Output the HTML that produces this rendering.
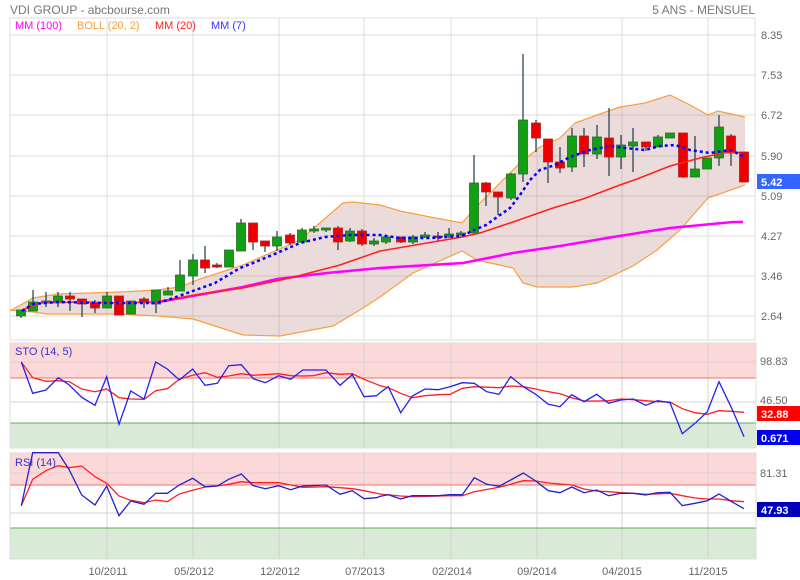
<!DOCTYPE html>
<html><head><meta charset="utf-8"><style>
body{margin:0;background:#fff;width:800px;height:580px;overflow:hidden;font-family:"Liberation Sans",Arial,sans-serif}
svg{position:absolute;left:0;top:0}
</style></head><body>
<svg id="s" width="800" height="580" xmlns="http://www.w3.org/2000/svg" font-family="Liberation Sans, Arial, sans-serif">
<rect width="800" height="580" fill="#fff"/>
<text x="10" y="14" font-size="12" fill="#777">VDI GROUP - abcbourse.com</text>
<text x="755" y="14" font-size="12" fill="#777" text-anchor="end">5 ANS - MENSUEL</text>
<!-- main panel -->
<rect x="10" y="18" width="745" height="322" fill="#fff" stroke="#ddd"/>
<g id="grid" stroke="#ddd" stroke-width="1"></g>
<rect x="10" y="343" width="746" height="35" fill="#fdd8d8"/>
<rect x="10" y="423" width="746" height="25" fill="#d9ead7"/>
<rect x="10" y="453" width="746" height="32" fill="#fdd8d8"/>
<rect x="10" y="528" width="746" height="31" fill="#d9ead7"/>
<g id="grid2" stroke="#d8d0d0" stroke-width="1"></g>
<line x1="10" y1="378" x2="756" y2="378" stroke="#f07070"/>
<line x1="10" y1="423" x2="756" y2="423" stroke="#66aa66"/>
<line x1="10" y1="485" x2="756" y2="485" stroke="#f07070"/>
<line x1="10" y1="528" x2="756" y2="528" stroke="#66aa66"/>
<rect x="10" y="343" width="746" height="105" fill="none" stroke="#ddd"/>
<rect x="10" y="453" width="746" height="106" fill="none" stroke="#ddd"/>
<g id="plot"></g>
<g font-size="11" fill="#666">
<text x="761" y="39">8.35</text><text x="761" y="79">7.53</text><text x="761" y="119">6.72</text><text x="761" y="160">5.90</text><text x="761" y="200">5.09</text><text x="761" y="240">4.27</text><text x="761" y="280">3.46</text><text x="761" y="320">2.64</text>
<text x="760" y="365">98.83</text><text x="760" y="404">46.50</text><text x="760" y="477">81.31</text>
<text x="108" y="575" text-anchor="middle">10/2011</text><text x="194" y="575" text-anchor="middle">05/2012</text><text x="280" y="575" text-anchor="middle">12/2012</text><text x="365" y="575" text-anchor="middle">07/2013</text><text x="452" y="575" text-anchor="middle">02/2014</text><text x="537" y="575" text-anchor="middle">09/2014</text><text x="622" y="575" text-anchor="middle">04/2015</text><text x="708" y="575" text-anchor="middle">11/2015</text>
</g>
<rect x="757" y="174" width="43" height="15" fill="#3366ff"/><text x="761" y="186" font-size="11" font-weight="bold" fill="#fff">5.42</text>
<rect x="757" y="406" width="43" height="15" fill="#ff0000"/><text x="761" y="418" font-size="11" font-weight="bold" fill="#fff">32.88</text>
<rect x="757" y="430" width="43" height="15" fill="#0000ee"/><text x="761" y="442" font-size="11" font-weight="bold" fill="#fff">0.671</text>
<rect x="757" y="502" width="43" height="15" fill="#0000bb"/><text x="761" y="514" font-size="11" font-weight="bold" fill="#fff">47.93</text>
<g font-size="11">
<text x="15" y="29" fill="#ff00ff">MM (100)</text><text x="77" y="29" fill="#f7a040">BOLL (20, 2)</text><text x="155" y="29" fill="#ff2020">MM (20)</text><text x="211" y="29" fill="#3333ff">MM (7)</text>
<text x="15" y="355" fill="#3333cc">STO (14, 5)</text>
<text x="15" y="466" fill="#3333cc">RSI (14)</text>
</g>
</svg>
<script>
var NS="http://www.w3.org/2000/svg";
function el(p,t,a){var e=document.createElementNS(NS,t);for(var k in a)e.setAttribute(k,a[k]);document.getElementById(p).appendChild(e);return e;}
var vx=[107,193,279,364,451,537,622,708];
vx.forEach(function(x){el("grid","line",{x1:x,y1:18,x2:x,y2:340});el("grid2","line",{x1:x,y1:343,x2:x,y2:448});el("grid2","line",{x1:x,y1:453,x2:x,y2:559});});
[35,75,115,156,196,236,276,316].forEach(function(y){el("grid","line",{x1:10,y1:y,x2:755,y2:y});});
[362,402].forEach(function(y){el("grid2","line",{x1:10,y1:y,x2:756,y2:y});});
[473,513].forEach(function(y){el("grid2","line",{x1:10,y1:y,x2:756,y2:y});});
function pts(a){return a.map(function(p){return p[0]+","+p[1]}).join(" ");}
var up=[[10,311],[33,298],[58,294],[120,292],[157,290],[180,287],[200,279],[243,265],[277,250],[300,240],[343,203],[353,202],[380,205],[400,211],[420,215],[462,223],[477,206],[520,163],[540,147],[560,138],[575,123],[597,115],[620,107],[645,103],[670,95],[690,105],[708,115],[718,111],[745,117]];
var lo=[[10,310],[33,312],[47,314],[120,314],[158,316],[193,319],[243,335],[280,336],[333,326],[360,310],[380,297],[413,273],[462,251],[477,260],[513,268],[523,283],[537,287],[573,287],[597,283],[633,266],[657,250],[680,230],[708,198],[745,185]];
el("plot","polygon",{points:pts(up.concat(lo.slice().reverse())),fill:"rgba(170,90,90,0.22)",stroke:"none"});
el("plot","polyline",{points:pts(up),fill:"none",stroke:"#f7a040","stroke-width":1.2});
el("plot","polyline",{points:pts(lo),fill:"none",stroke:"#f7a040","stroke-width":1.2});
// candles: x, open, close, high, low (y coords)
var C=[[21,316,310,310,318],[33,311,302,290,311],[46,303,301,292,307],[58,302,296,292,307],[70,296,299,292,311],[82,299,304,299,317],[95,303,308,300,313],[107,308,296,292,308],[119,296,315,296,315],[131,314,301,301,314],[144,299,302,297,308],[156,304,290,290,313],[168,295,291,287,295],[180,291,275,260,291],[193,276,260,254,285],[205,260,268,246,273],[217,265,267,263,268],[229,267,250,250,267],[241,251,223,219,251],[253,223,242,223,250],[265,241,246,241,252],[277,246,237,231,251],[290,235,243,233,245],[302,242,230,228,242],[314,231,229,226,233],[326,230,228,228,232],[338,228,242,226,250],[350,241,231,228,242],[362,231,244,229,246],[374,244,241,238,246],[386,242,237,236,244],[401,237,242,237,243],[413,242,237,235,244],[425,237,235,232,238],[438,236,236,232,241],[449,236,234,228,238],[461,234,233,231,236],[474,233,183,155,233],[486,183,192,182,206],[498,192,197,192,215],[511,198,174,173,200],[523,174,120,54,182],[536,123,138,120,152],[548,139,162,139,183],[560,162,168,147,173],[572,167,136,128,172],[584,136,154,128,167],[597,154,137,125,159],[609,138,157,108,176],[621,157,145,135,169],[633,146,142,128,172],[646,142,147,142,151],[658,147,137,135,147],[670,138,133,133,138],[683,133,177,133,178],[695,177,169,136,177],[707,169,158,158,169],[719,158,127,115,166],[731,136,153,134,166],[744,152,182,152,182]];
C.forEach(function(c){var x=c[0],o=c[1],cl=c[2];var g=cl<o;
el("plot","line",{x1:x,y1:c[3],x2:x,y2:c[4],stroke:"#1a3a4a","stroke-width":1.2});
var t=Math.min(o,cl),h=Math.max(Math.abs(o-cl),1.5);
el("plot","rect",{x:x-4.5,y:t,width:9,height:h,fill:g?"#11a011":"#ee0000",stroke:g?"#2a6a2a":"#aa2222","stroke-width":0.8});});
var mg=[[153,303],[243,287],[277,279],[327,273],[380,268],[463,263],[513,253],[560,246],[613,237],[670,228],[733,222],[743,222]];
el("plot","polyline",{points:pts(mg),fill:"none",stroke:"#ff00ff","stroke-width":2.5});
var rd=[[22,310],[40,303],[80,302],[120,303],[155,302],[200,294],[243,288],[290,278],[340,265],[380,251],[462,237],[480,233],[513,222],[553,208],[583,199],[620,185],[637,179],[670,166],[700,158],[723,153],[737,152],[743,155]];
el("plot","polyline",{points:pts(rd),fill:"none",stroke:"#ff2020","stroke-width":1.5});
var bl=[[22,311],[33,304],[58,302],[107,303],[156,303],[168,300],[190,292],[215,283],[240,268],[253,263],[277,253],[300,243],[325,237],[350,235],[380,235],[400,238],[430,238],[462,236],[474,230],[486,225],[500,215],[510,208],[520,195],[530,180],[540,170],[555,165],[570,157],[590,150],[610,146],[625,148],[645,150],[660,146],[675,145],[690,150],[710,153],[730,150],[745,157]];
el("plot","polyline",{points:pts(bl),fill:"none",stroke:"#0000ff","stroke-width":2.5,"stroke-dasharray":"3,3"});
function z(a,ox){return a.map(function(p){return [ox+p[0]/3,340+p[1]/3];});}
var sb=z([[34,66],[68,160],[108,150],[145,113],[178,135],[215,172],[255,196],[290,110],[327,253],[362,153],[402,177],[437,66],[472,87],[508,120],[548,87],[585,136],[622,130],[656,77],[694,74],[730,116],[766,128],[806,107],[842,118],[878,90],[948,90],[990,136],[1027,104],[1062,170],[1100,167],[1110,158]],10).concat(z([[25,140],[62,218],[97,168],[135,147],[175,149],[210,140],[247,128],[283,130],[320,155],[357,163],[392,110],[430,140],[467,163],[505,193],[540,200],[575,164],[612,185],[650,163],[686,190],[722,180],[760,177],[797,196],[833,182],[870,188],[907,281],[945,250],[982,215],[1017,125],[1055,205],[1092,290]],380));
var sr=z([[34,66],[68,113],[108,124],[145,122],[178,125],[215,147],[255,155],[290,147],[327,173],[362,177],[402,178],[437,152],[472,146],[508,118],[548,106],[585,98],[622,112],[656,108],[694,101],[730,106],[806,101],[842,107],[878,108],[910,107],[948,98],[990,103],[1027,101],[1062,118],[1100,133],[1110,137]],10).concat(z([[25,143],[62,160],[97,173],[135,167],[175,164],[210,163],[247,145],[283,140],[357,143],[392,138],[430,140],[467,147],[505,155],[540,161],[575,173],[612,183],[650,183],[686,182],[722,177],[760,179],[833,185],[870,186],[907,206],[945,218],[982,223],[1017,212],[1055,214],[1092,217]],380));
var rb=z([[34,497],[68,338],[145,338],[178,390],[215,465],[255,495],[290,438],[327,527],[362,483],[402,493],[437,460],[472,460],[508,435],[548,415],[585,440],[622,438],[656,418],[694,402],[730,437],[766,446],[806,437],[842,449],[878,438],[948,435],[990,463],[1027,452],[1062,476],[1100,473],[1110,469]],10).concat(z([[25,464],[62,477],[97,467],[175,467],[210,464],[247,464],[283,413],[320,433],[357,439],[392,420],[430,399],[467,423],[505,452],[540,458],[575,441],[612,458],[650,450],[686,467],[722,460],[760,460],[797,465],[833,458],[870,457],[907,497],[945,490],[982,482],[1017,462],[1055,485],[1092,506]],380));
var rr=z([[34,497],[68,418],[108,392],[145,377],[178,383],[215,378],[255,410],[290,430],[327,468],[362,481],[402,488],[437,480],[472,485],[508,462],[548,451],[585,441],[622,438],[656,433],[694,425],[730,428],[806,428],[842,435],[878,442],[948,440],[990,443],[1027,446],[1062,452],[1100,460],[1110,462]],10).concat(z([[62,468],[97,470],[210,467],[247,467],[283,455],[357,442],[392,433],[430,422],[467,423],[505,429],[575,435],[612,447],[650,453],[686,455],[722,458],[760,460],[797,463],[870,460],[907,467],[945,474],[982,477],[1017,477],[1055,482],[1092,485]],380));
function r1(a){return a.map(function(p){return [p[0].toFixed(1),p[1].toFixed(1)];});}
el("plot","polyline",{points:pts(r1(sr)),fill:"none",stroke:"#ff2020","stroke-width":1.3});
el("plot","polyline",{points:pts(r1(sb)),fill:"none",stroke:"#2222ee","stroke-width":1.3});
el("plot","polyline",{points:pts(r1(rr)),fill:"none",stroke:"#ff2020","stroke-width":1.3});
el("plot","polyline",{points:pts(r1(rb)),fill:"none",stroke:"#2222cc","stroke-width":1.3});
</script>
</body></html>
